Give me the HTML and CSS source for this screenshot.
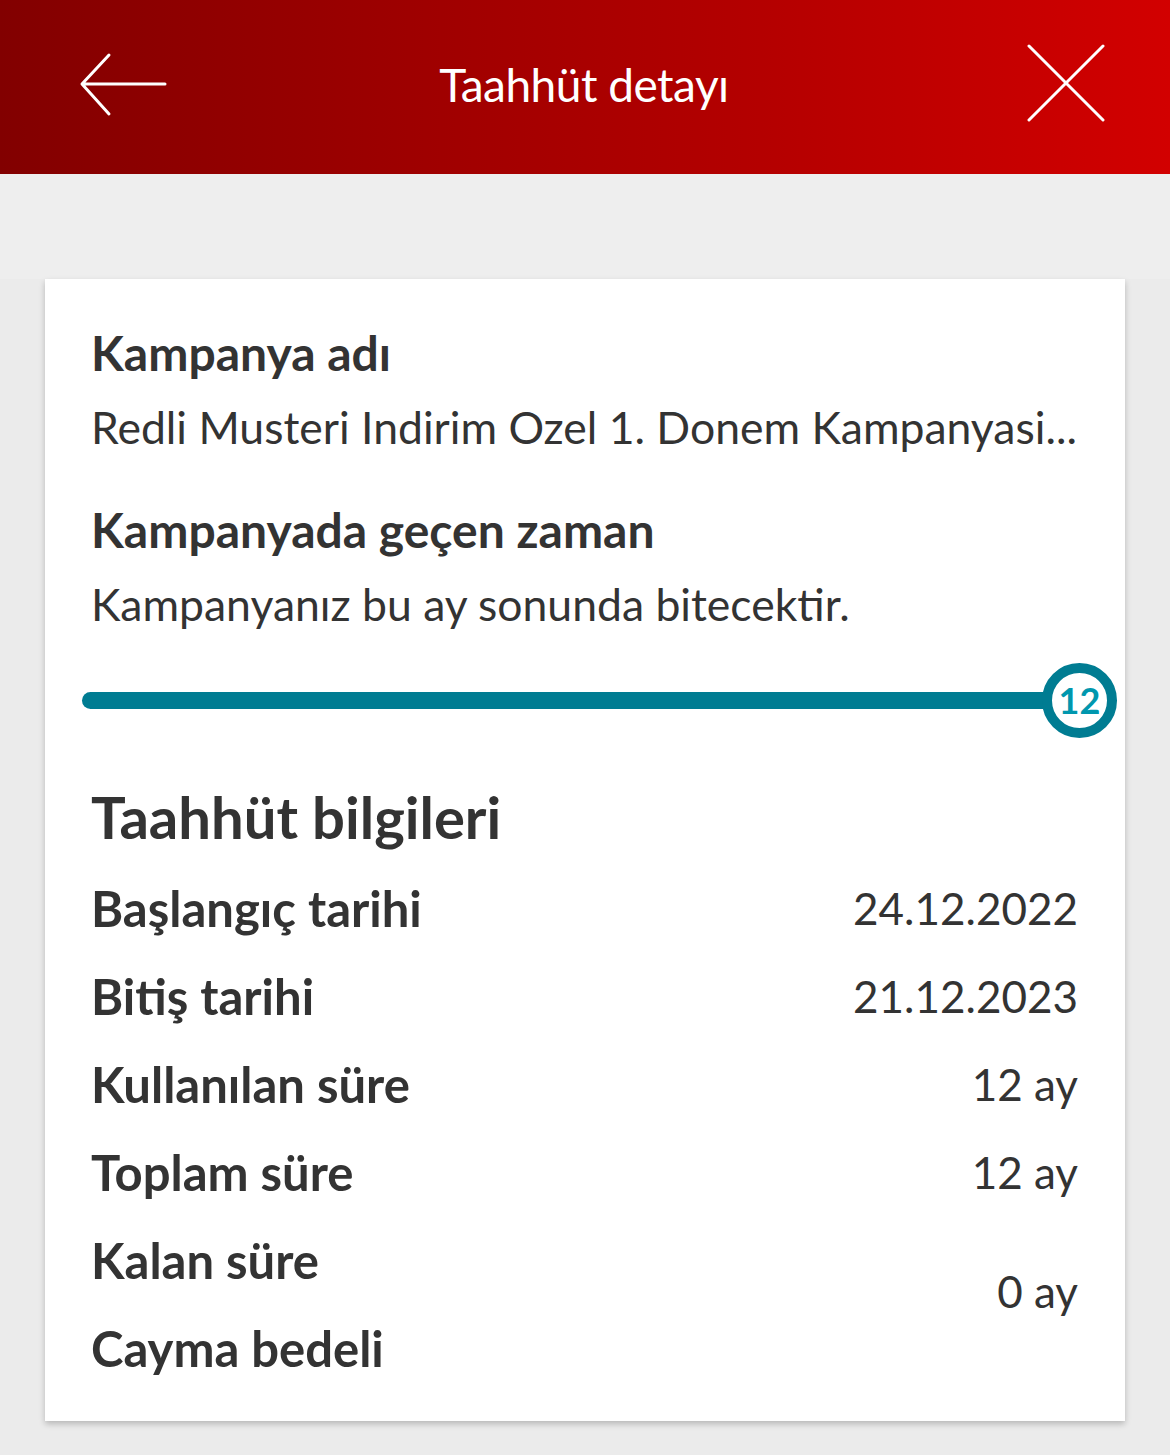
FILE: index.html
```html
<!DOCTYPE html>
<html lang="tr">
<head>
<meta charset="utf-8">
<link rel="stylesheet" href="styles.css">
</head>
<body>
<header class="topbar">
  <svg class="icon back" width="90" height="66" viewBox="0 0 90 66"><path d="M86 32H4M30 3L3 32l27 30" fill="none" stroke="#fff" stroke-width="3" stroke-linecap="round" stroke-linejoin="round"/></svg>
  <h1 class="title">Taahhüt detayı</h1>
  <svg class="icon close" width="78" height="78" viewBox="0 0 78 78"><path d="M2 2L76 76M76 2L2 76" fill="none" stroke="#fff" stroke-width="3" stroke-linecap="round"/></svg>
</header>
<div class="band"></div>
<main class="page">
  <section class="card">
    <div class="block">
      <div class="label">Kampanya adı</div>
      <div class="text">Redli Musteri Indirim Ozel 1. Donem Kampanyasi...</div>
    </div>
    <div class="block second">
      <div class="label">Kampanyada geçen zaman</div>
      <div class="text">Kampanyanız bu ay sonunda bitecektir.</div>
    </div>
    <div class="progress">
      <div class="track"></div>
      <div class="knob">12</div>
    </div>
    <h2 class="section-title">Taahhüt bilgileri</h2>
    <div class="rows">
      <div class="row"><span class="key">Başlangıç tarihi</span><span class="val">24.12.2022</span></div>
      <div class="row"><span class="key">Bitiş tarihi</span><span class="val">21.12.2023</span></div>
      <div class="row"><span class="key">Kullanılan süre</span><span class="val">12 ay</span></div>
      <div class="row"><span class="key">Toplam süre</span><span class="val">12 ay</span></div>
      <div class="row double">
        <div class="keys"><span class="key">Kalan süre</span><span class="key">Cayma bedeli</span></div>
        <span class="val lifted">0 ay</span>
      </div>
    </div>
  </section>
</main>
</body>
</html>
```
FILE: styles.css
```css
* { box-sizing: border-box; }
html, body { margin: 0; padding: 0; }
body {
  background: #ebebeb;
  font-family: Lato, "Noto Sans", sans-serif;
  color: #333333;
  width: 1170px;
  min-height: 1455px;
}
.topbar {
  height: 174px;
  background: linear-gradient(90deg, #820000 0%, #9e0000 35%, #b40000 65%, #d20000 100%);
  display: flex;
  align-items: center;
  justify-content: space-between;
  padding: 0 65px 0 79px;
}
.icon { display: block; }
.back { margin-top: -4px; }
.close { margin-top: -8px; }
.title {
  margin: -6px 0 0 -28px;
  font-weight: 400;
  font-size: 46px;
  color: #fff;
  letter-spacing: -0.5px;
}
.band { height: 105px; background: #eeeeee; }
.page { padding: 0 45px 34px; }
.card {
  background: #fff;
  box-shadow: 0 3px 6px rgba(0,0,0,0.22);
  padding: 46px 47px 28px 46px;
  min-height: 1142px;
}
.block.second { margin-top: 47px; }
.label {
  font-weight: 700;
  font-size: 48px;
  line-height: 56px;
  white-space: nowrap;
}
.text {
  margin-top: 18px;
  font-weight: 400;
  font-size: 44.5px;
  line-height: 56px;
  white-space: nowrap;
}
.progress {
  height: 76px;
  margin: 30px -39px 0 -9px;
  display: flex;
  align-items: center;
}
.track {
  flex: 1;
  height: 17px;
  background: #007c92;
  border-radius: 9px 0 0 9px;
}
.knob {
  flex: none;
  width: 75px;
  height: 75px;
  border: 10px solid #007c92;
  border-radius: 50%;
  background: #fff;
  color: #0097ae;
  font-weight: 700;
  font-size: 36px;
  display: flex;
  align-items: center;
  justify-content: center;
  margin-left: -2px;
}
.section-title {
  margin: 43px 0 0;
  font-weight: 700;
  font-size: 58px;
  line-height: 72px;
}
.rows { margin-top: 11px; }
.row {
  display: flex;
  justify-content: space-between;
  align-items: center;
  height: 88px;
}
.row.double { height: 176px; }
.keys { display: flex; flex-direction: column; }
.keys .key { height: 88px; display: flex; align-items: center; }
.key { font-weight: 700; font-size: 49px; line-height: 60px; white-space: nowrap; }
.val { font-weight: 400; font-size: 44px; line-height: 60px; }
.val.lifted { margin-bottom: 26px; }
```
